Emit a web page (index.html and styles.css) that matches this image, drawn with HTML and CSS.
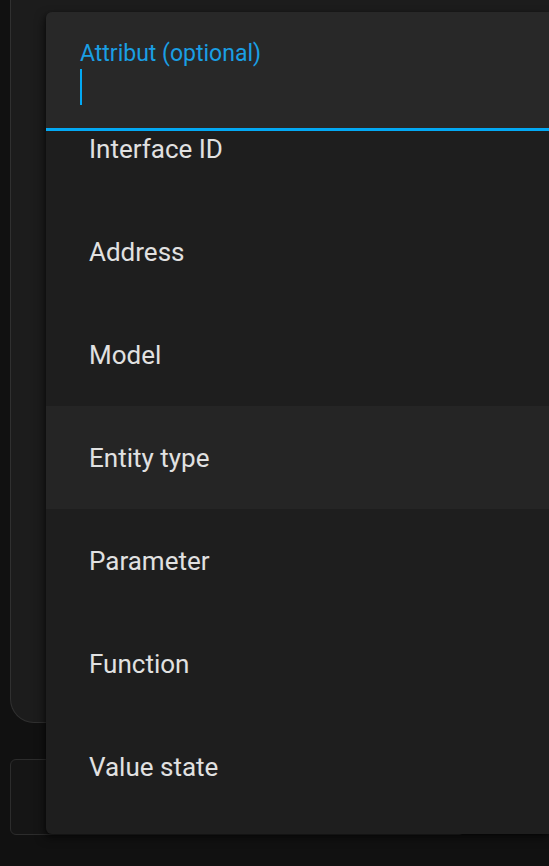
FILE: index.html
```html
<!DOCTYPE html>
<html lang="en">
<head>
	<meta charset="UTF-8">
	<title>Attribut</title>
	<link rel="stylesheet" href="styles.css">
</head>
<body>
	<div class="page">
		<div class="card"></div>
		<div class="sub"></div>
	</div>

	<!-- 下拉菜单，盖在卡片上面 -->
	<div class="menu">
		<div class="field">
			<label class="field-label">Attribut (optional)</label>
			<span class="caret"></span>
		</div>
		<div class="options">
			<ul class="options-list">
				<li>Interface ID</li>
				<li>Address</li>
				<li>Model</li>
				<li class="active">Entity type</li>
				<li>Parameter</li>
				<li>Function</li>
				<li>Value state</li>
			</ul>
		</div>
	</div>
</body>
</html>
```

FILE: styles.css
```css
html, body {
	margin: 0;
	height: 100%;
}
body {
	background: #111111;
	font-family: Roboto, "Liberation Sans", sans-serif;
	overflow: hidden;
}

/* 背景卡片，右边和上边被窗口裁掉 */
.page {
	padding-left: 10px;
}
.card {
	margin-top: -40px;
	height: 761px;
	background: #1c1c1c;
	border: 1px solid #303030;
	border-right: none;
	border-radius: 24px 0 0 24px;
}
.sub {
	margin-top: 36px;
	width: 453px;
	height: 74px;
	background: #151515;
	border: 1px solid #2c2c2c;
	border-radius: 6px;
}

/* 下拉菜单 */
.menu {
	position: absolute;
	left: 46px;
	top: 12px;
	right: 0;
	height: 822px;
	display: flex;
	flex-direction: column;
	border-radius: 6px 0 0 6px;
	box-shadow: -2px 4px 10px rgba(0, 0, 0, 0.5), 0 1px 3px rgba(0, 0, 0, 0.4);
	overflow: hidden;
}
.field {
	flex: none;
	height: 119px;
	box-sizing: border-box;
	padding: 28px 0 0 34px;
	background: #282828;
	border-bottom: 3px solid #03a9f4;
}
.field-label {
	display: block;
	font-size: 23px;
	line-height: 27px;
	color: #1a9fe4;
}
.caret {
	display: block;
	width: 2px;
	height: 36px;
	margin-top: 2px;
	background: #03a9f4;
}
.options {
	flex: 1;
	background: #1e1e1e;
	overflow: hidden;
}
.options-list {
	list-style: none;
	margin: -34px 0 0;
	padding: 0;
}
.options-list li {
	height: 103px;
	display: flex;
	align-items: center;
	padding-left: 43px;
	font-size: 26px;
	color: #e1e1e1;
}
.options-list li.active {
	background: #252525;
}
```
